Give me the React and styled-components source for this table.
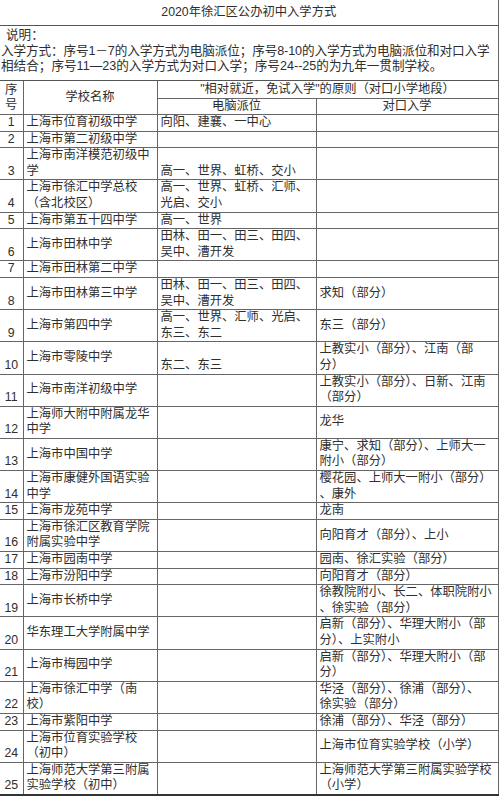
import React from "react";
import styled, { createGlobalStyle } from "styled-components";

const Global = createGlobalStyle`
  html, body { margin: 0; padding: 0; background: #fff; }
  body { font-family: "Liberation Sans", "Noto Sans CJK SC", sans-serif; color: #2e2e2e; }
`;

const Sheet = styled.table`
  width: 498px;
  table-layout: fixed;
  border-collapse: collapse;
  font-size: 12.3px;
  line-height: 15.6px;
`;

const Cell = styled.td`
  border: 1px solid #666;
  border-left: ${(p) => (p.$first ? "none" : "1px solid #666")};
  padding: 0 0 0 3px;
  white-space: nowrap;
  overflow: hidden;
  vertical-align: ${(p) => p.$valign || "middle"};
  text-align: ${(p) => p.$align || "left"};
`;

const TitleCell = styled(Cell)`
  height: 25px;
  border-top: none;
  text-align: center;
  padding: 0;
  border-bottom: 1.5px solid #555;
`;

const NoteCell = styled(Cell)`
  height: 50px;
  font-size: 12.6px;
  line-height: 15.5px;
  padding: 2px 0 2px 1px;
  vertical-align: top;
  border-bottom: 1.5px solid #555;
`;

const NoteLine = styled.div`
  padding-left: ${(p) => (p.$indent ? "5px" : "0")};
  letter-spacing: ${(p) => (p.$tight ? "-0.1px" : "0")};
`;

const HeadCell = styled(Cell)`
  text-align: center;
  padding: 0;
  height: ${(p) => p.$h || 14}px;
  line-height: 15px;
`;

const NumCell = styled(Cell)`
  text-align: center;
  vertical-align: bottom;
  padding: 0;
  border-left: none;
`;

const Row = styled.tr`
  height: ${(p) => (p.$tall ? "32.1px" : "16.5px")};
`;

const LastRow = styled(Row)`
  & > td { border-bottom: 2px solid #333; }
`;

const Lines = ({ v }) => {
  if (!v) return null;
  const arr = Array.isArray(v) ? v : [v];
  return arr.map((t, i) => <div key={i}>{t}</div>);
};

const rows = [
  ["上海市位育初级中学", "向阳、建襄、一中心", "", false],
  ["上海市第二初级中学", "", "", false],
  [["上海市南洋模范初级中", "学"], "高一、世界、虹桥、交小", "", true],
  [["上海市徐汇中学总校", "（含北校区）"], ["高一、世界、虹桥、汇师、", "光启、交小"], "", true],
  ["上海市第五十四中学", "高一、世界", "", false],
  ["上海市田林中学", ["田林、田一、田三、田四、", "吴中、漕开发"], "", true],
  ["上海市田林第二中学", "", "", false],
  ["上海市田林第三中学", ["田林、田一、田三、田四、", "吴中、漕开发"], "求知（部分）", true],
  ["上海市第四中学", ["高一、世界、汇师、光启、", "东三、东二"], "东三（部分）", true],
  ["上海市零陵中学", "东二、东三", ["上教实小（部分）、江南（部", "分）"], true],
  ["上海市南洋初级中学", "", ["上教实小（部分）、日新、江南", "（部分）"], true],
  [["上海师大附中附属龙华", "中学"], "", "龙华", true],
  ["上海市中国中学", "", ["康宁、求知（部分）、上师大一", "附小（部分）"], true],
  [["上海市康健外国语实验", "中学"], "", ["樱花园、上师大一附小（部分）", "、康外"], true],
  ["上海市龙苑中学", "", "龙南", false],
  [["上海市徐汇区教育学院", "附属实验中学"], "", "向阳育才（部分）、上小", true],
  ["上海市园南中学", "", "园南、徐汇实验（部分）", false],
  ["上海市汾阳中学", "", "向阳育才（部分）", false],
  ["上海市长桥中学", "", ["徐教院附小、长二、体职院附小", "、徐实验（部分）"], true],
  ["华东理工大学附属中学", "", ["启新（部分）、华理大附小（部", "分）、上实附小"], true],
  ["上海市梅园中学", "", ["启新（部分）、华理大附小（部", "分）"], true],
  [["上海市徐汇中学（南", "校）"], "", ["华泾（部分）、徐浦（部分）、", "徐实验（部分）"], true],
  ["上海市紫阳中学", "", "徐浦（部分）、华泾（部分）", false],
  [["上海市位育实验学校", "（初中）"], "", "上海市位育实验学校（小学）", true],
  [["上海师范大学第三附属", "实验学校（初中）"], "", ["上海师范大学第三附属实验学校", "（小学）"], true],
];

export default function App() {
  return (
    <>
      <Global />
      <Sheet>
        <colgroup>
          <col style={{ width: 23 }} />
          <col style={{ width: 134 }} />
          <col style={{ width: 159 }} />
          <col style={{ width: 182 }} />
        </colgroup>
        <tbody>
          <tr>
            <TitleCell $first colSpan={4}>2020年徐汇区公办初中入学方式</TitleCell>
          </tr>
          <tr>
            <NoteCell $first colSpan={4}>
              <NoteLine $indent>说明：</NoteLine>
              <NoteLine $tight>入学方式：序号1－7的入学方式为电脑派位；序号8-10的入学方式为电脑派位和对口入学</NoteLine>
              <NoteLine>相结合；序号11—23的入学方式为对口入学；序号24--25的为九年一贯制学校。</NoteLine>
            </NoteCell>
          </tr>
          <tr>
            <HeadCell $first rowSpan={2}>
              <div>序</div>
              <div>号</div>
            </HeadCell>
            <HeadCell rowSpan={2}>学校名称</HeadCell>
            <HeadCell colSpan={2} $h={17}>"相对就近，免试入学"的原则（对口小学地段）</HeadCell>
          </tr>
          <tr>
            <HeadCell $h={13}>电脑派位</HeadCell>
            <HeadCell $h={13}>对口入学</HeadCell>
          </tr>
          {rows.map(([name, pick, match, tall], i) => {
            const R = i === rows.length - 1 ? LastRow : Row;
            return (
              <R key={i} $tall={tall}>
                <NumCell>{i + 1}</NumCell>
                <Cell><Lines v={name} /></Cell>
                <Cell $valign="bottom"><Lines v={pick} /></Cell>
                <Cell><Lines v={match} /></Cell>
              </R>
            );
          })}
        </tbody>
      </Sheet>
    </>
  );
}
